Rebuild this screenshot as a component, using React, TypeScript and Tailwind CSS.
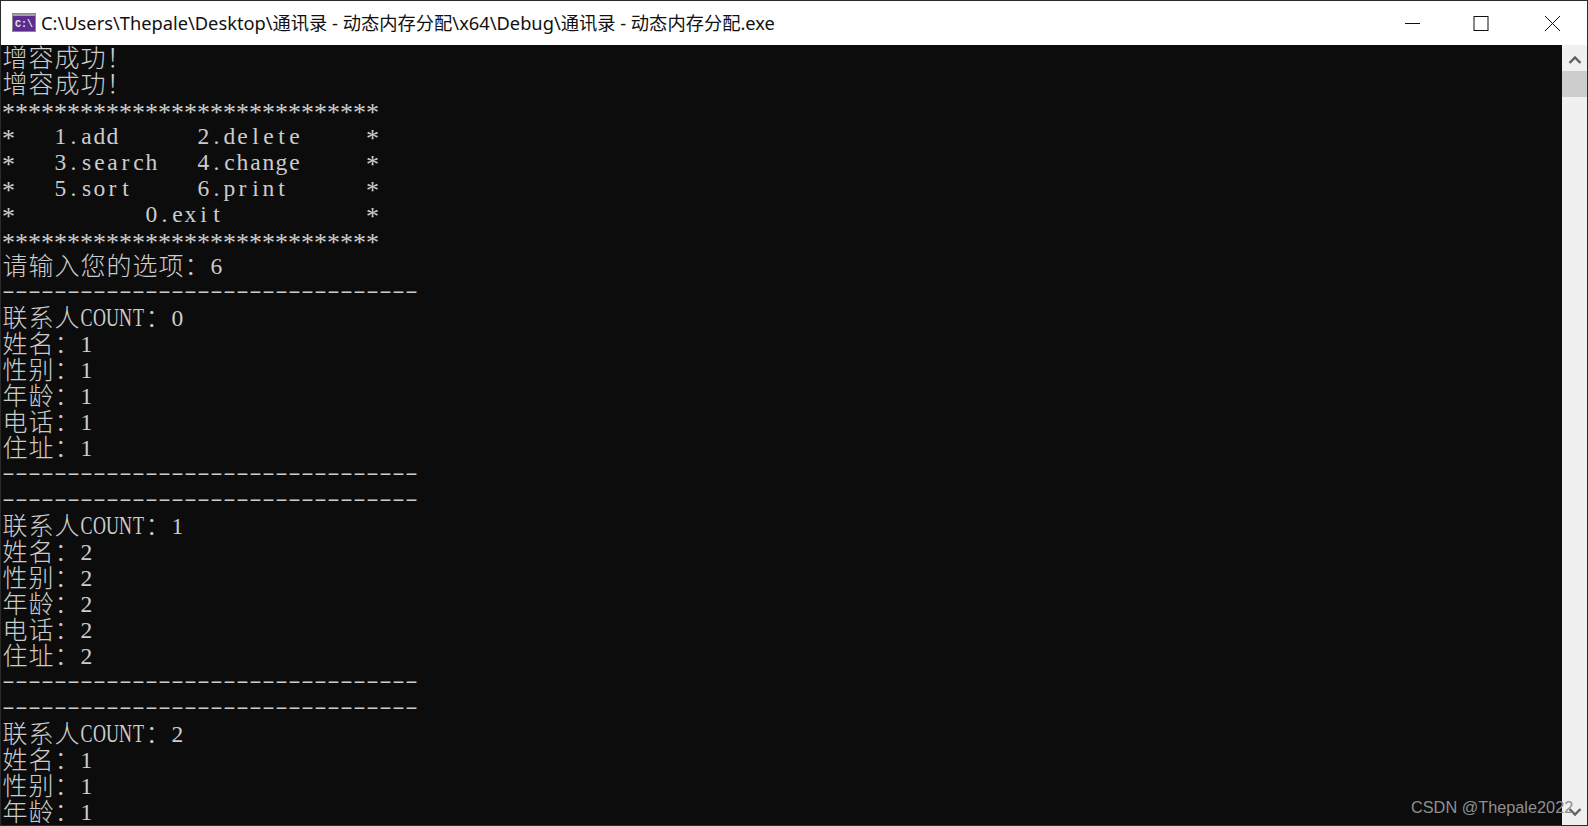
import React from "react";

const lines = [
  "增容成功！",
  "增容成功！",
  "*****************************",
  "*   1.add      2.delete     *",
  "*   3.search   4.change     *",
  "*   5.sort     6.print      *",
  "*          0.exit           *",
  "*****************************",
  "请输入您的选项：6",
  "--------------------------------",
  "联系人COUNT：0",
  "姓名：1",
  "性别：1",
  "年龄：1",
  "电话：1",
  "住址：1",
  "--------------------------------",
  "--------------------------------",
  "联系人COUNT：1",
  "姓名：2",
  "性别：2",
  "年龄：2",
  "电话：2",
  "住址：2",
  "--------------------------------",
  "--------------------------------",
  "联系人COUNT：2",
  "姓名：1",
  "性别：1",
  "年龄：1",
];

function Cell({ c }: { c: string }) {
  if (c.charCodeAt(0) > 255) {
    return <span className="mt-[1px] h-[25px] w-[26px] shrink-0 text-center text-[25px] font-light leading-[25px]">{c}</span>;
  }
  if (c === "-") {
    return <span className="mt-[2px] h-[18px] w-[13px] shrink-0 text-center text-[22px] leading-[18px] scale-x-[1.7]">{c}</span>;
  }
  if (c === "*") {
    return <span className="mt-[6px] h-[20px] w-[13px] shrink-0 text-center text-[26px] leading-[20px]">{c}</span>;
  }
  if (c >= "A" && c <= "Z") {
    return <span className="flex w-[13px] shrink-0 justify-center text-[25px] scale-x-[0.72]">{c}</span>;
  }
  return <span className="flex w-[13px] shrink-0 justify-center text-[24px] scale-x-[0.98]">{c === " " ? "\u00a0" : c}</span>;
}

function ConsoleLine({ text }: { text: string }) {
  return (
    <div className="flex h-[26px] leading-[26px] whitespace-pre">
      {Array.from(text).map((c, i) => (
        <Cell key={i} c={c} />
      ))}
    </div>
  );
}

function AppIcon() {
  return (
    <svg width="24" height="19" viewBox="0 0 24 19" className="shrink-0">
      <rect x="0.5" y="0.5" width="23" height="18" fill="#5c2d91" stroke="#8a8a8a" />
      <rect x="1" y="1" width="22" height="2" fill="#a0a0a0" />
      <text x="12" y="14" textAnchor="middle" fontSize="10" fontWeight="700" fill="#e4e0ee" fontFamily="Liberation Mono, monospace">C:\</text>
    </svg>
  );
}

function Controls() {
  return (
    <div className="flex items-center">
      <svg width="70" height="44" viewBox="0 0 70 44">
        <path d="M29 22.5H44" stroke="#111" />
      </svg>
      <svg width="70" height="44" viewBox="0 0 70 44">
        <rect x="28" y="15.5" width="14" height="14" fill="none" stroke="#111" />
      </svg>
      <svg width="70" height="44" viewBox="0 0 70 44">
        <path d="M29 15L44 30M44 15L29 30" stroke="#111" />
      </svg>
    </div>
  );
}

export default function App() {
  return (
    <div className="relative flex h-[826px] w-[1588px] flex-col overflow-hidden border border-[#2b2b2b] bg-[#0c0c0c] font-['Liberation_Serif','Noto_Sans_CJK_SC',serif]">
      <div className="flex h-[44px] shrink-0 items-center justify-between bg-white pl-[11px] pr-[1px]">
        <div className="flex items-center gap-[5px] font-['Noto_Sans','Noto_Sans_CJK_SC',sans-serif] text-[18.27px] text-[#111]">
          <AppIcon />
          <span>C:\Users\Thepale\Desktop\通讯录 - 动态内存分配\x64\Debug\通讯录 - 动态内存分配.exe</span>
        </div>
        <Controls />
      </div>
      <div className="flex min-h-0 flex-1">
        <div className="min-w-0 flex-1 overflow-hidden pl-[1px] text-[#cccccc]">
          {lines.map((l, i) => (
            <ConsoleLine key={i} text={l} />
          ))}
        </div>
        <div className="flex w-[26px] shrink-0 flex-col border-l border-[#0c0c0c] bg-[#f0f0f0]">
          <div className="flex h-[26px] items-center justify-center pt-[4px]">
            <svg width="14" height="12" viewBox="0 0 14 12">
              <path d="M1.5 9L7 3.5L12.5 9" fill="none" stroke="#606060" strokeWidth="2.4" />
            </svg>
          </div>
          <div className="h-[26px] bg-[#cdcdcd]" />
          <div className="flex-1" />
          <div className="flex h-[26px] items-center justify-center">
            <svg width="14" height="12" viewBox="0 0 14 12">
              <path d="M1.5 3L7 8.5L12.5 3" fill="none" stroke="#606060" strokeWidth="2.4" />
            </svg>
          </div>
        </div>
      </div>
      <div className="absolute left-[1410px] top-[796px] font-['Liberation_Sans',sans-serif] text-[16.3px] leading-[20px] text-[#8f8f8f]">
        CSDN @Thepale2022
      </div>
    </div>
  );
}
